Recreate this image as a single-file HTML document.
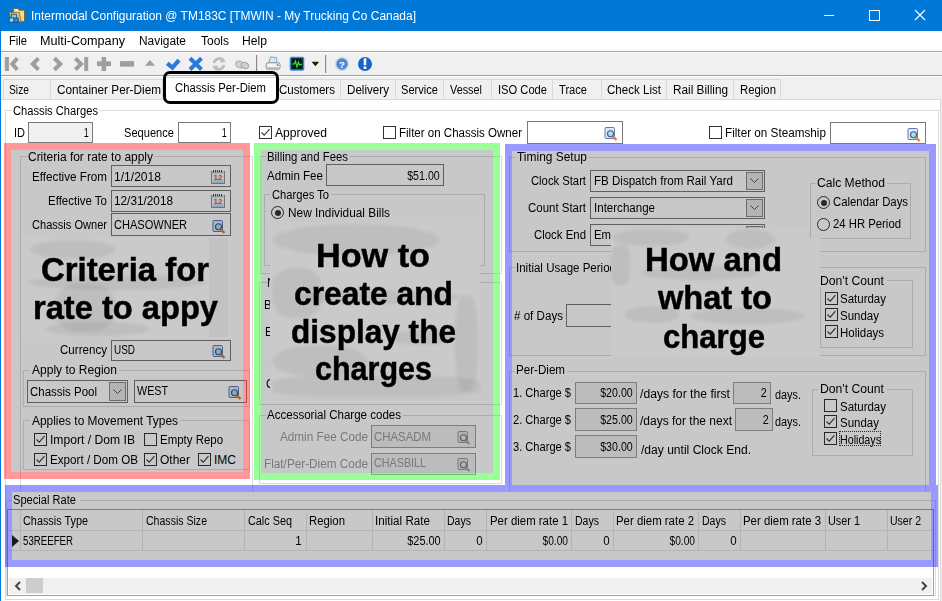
<!DOCTYPE html>
<html><head><meta charset="utf-8"><style>
html,body{margin:0;padding:0;}
body{width:942px;height:601px;overflow:hidden;position:relative;background:#fff;font-family:"Liberation Sans", sans-serif;}
</style></head><body><div style="position:absolute;left:0px;top:0px;width:942px;height:31px;background:#0078d7"></div><svg style="position:absolute;left:0;top:0" width="30" height="30" viewBox="0 0 30 30">
<path d="M13.3 8.6 L18 8.6 L19.2 10.2 L24.5 10.2 L24.5 21.5 L14 21.5 Z" fill="#f3dc92" stroke="#7d5e1c" stroke-width="0.8"/>
<path d="M14.5 9.5 L17.5 9.5 L18.5 11 L17 11 Z" fill="#fff8e0"/>
<path d="M9.4 12.4 L19.3 12.4 L21.2 21.7 L11.2 21.7 Z" fill="#e5c26a" stroke="#8a6a22" stroke-width="0.8"/>
<g stroke="#173c73" stroke-width="0.7">
<rect x="11.4" y="14.2" width="5.2" height="4.2" fill="#7cc6f2"/>
<rect x="9.3" y="18" width="4.6" height="4.1" fill="#93d3f7"/>
<rect x="13.9" y="18" width="4.4" height="4.1" fill="#3c82c4"/>
</g>
</svg><span class="tx0" style="position:absolute;left:31px;top:9.84px;font-size:12px;line-height:12px;white-space:nowrap;transform-origin:left center;transform:scaleX(0.9971);color:#fff;font-weight:normal;">Intermodal Configuration @ TM183C [TMWIN - My Trucking Co Canada]</span><div style="position:absolute;left:824px;top:15px;width:10px;height:1px;background:#fff"></div><div style="position:absolute;left:869px;top:10px;width:11px;height:11px;box-sizing:border-box;border:1px solid #fff"></div><svg style="position:absolute;left:914px;top:9px" width="12" height="12" viewBox="0 0 12 12"><path d="M1 1 L11 11 M11 1 L1 11" stroke="#fff" stroke-width="1.1"/></svg><div style="position:absolute;left:0px;top:31px;width:1px;height:570px;background:#0078d7"></div><span class="tx1" style="position:absolute;left:9px;top:34.84px;font-size:12px;line-height:12px;white-space:nowrap;transform-origin:left center;transform:scaleX(0.9305);color:#000;font-weight:normal;">File</span><span class="tx2" style="position:absolute;left:40px;top:34.84px;font-size:12px;line-height:12px;white-space:nowrap;transform-origin:left center;transform:scaleX(1.0532);color:#000;font-weight:normal;">Multi-Company</span><span class="tx3" style="position:absolute;left:139px;top:34.84px;font-size:12px;line-height:12px;white-space:nowrap;transform-origin:left center;transform:scaleX(0.9921);color:#000;font-weight:normal;">Navigate</span><span class="tx4" style="position:absolute;left:201px;top:34.84px;font-size:12px;line-height:12px;white-space:nowrap;transform-origin:left center;transform:scaleX(0.9994);color:#000;font-weight:normal;">Tools</span><span class="tx5" style="position:absolute;left:242px;top:34.84px;font-size:12px;line-height:12px;white-space:nowrap;transform-origin:left center;transform:scaleX(1.0127);color:#000;font-weight:normal;">Help</span><div style="position:absolute;left:1px;top:49px;width:941px;height:1px;background:#f2f2f2"></div><div style="position:absolute;left:1px;top:51px;width:941px;height:1px;background:#a0a0a0"></div><div style="position:absolute;left:1px;top:53px;width:941px;height:22px;background:#f0f0f0"></div><div style="position:absolute;left:1px;top:75px;width:941px;height:1px;background:#a0a0a0"></div><svg style="position:absolute;left:0;top:52px" width="380" height="24" viewBox="0 0 380 24">
<g fill="#9e9e9e">
<rect x="4.8" y="5" width="4.1" height="14"/>
<rect x="84.2" y="5" width="4" height="14"/>
<rect x="97" y="9.3" width="14" height="4.8"/>
<rect x="101.6" y="5" width="4.5" height="14"/>
<rect x="120" y="9.1" width="14" height="5.5"/>
<path d="M145 13.8 L150 7.9 L155.1 13.8 Z"/>
</g>
<g fill="none" stroke="#9e9e9e" stroke-width="4" stroke-linejoin="miter" stroke-miterlimit="4">
<polyline points="17.3,6.3 12.4,12 17.3,17.7"/>
<polyline points="38.4,6.3 32.8,12 38.4,17.7"/>
<polyline points="54.4,6.3 60.2,12 54.4,17.7"/>
<polyline points="75.4,6.3 81,12 75.4,17.7"/>
</g>
<polyline points="167.2,11.3 172.5,15.6 179,8.2" fill="none" stroke="#2a7ad8" stroke-width="4.2"/>
<path d="M190 6.3 L201.5 17.5 M201.5 6.3 L190 17.5" stroke="#2a7ad8" stroke-width="4"/>
<path d="M214 11 A5.5 5.5 0 0 1 223.5 8.5 M224 13 A5.5 5.5 0 0 1 214.5 15.5" fill="none" stroke="#bdbdbd" stroke-width="2.8"/>
<path d="M221.5 5 L226 10 L220 10.5 Z M216.5 19 L212 14 L218 13.5 Z" fill="#bdbdbd"/>
<g fill="#d0d0d0" stroke="#a8a8a8" stroke-width="1"><ellipse cx="240" cy="12.5" rx="4.5" ry="3.3" transform="rotate(20 240 12.5)"/><ellipse cx="245" cy="13.5" rx="3.8" ry="3" transform="rotate(20 245 13.5)"/></g>
<rect x="256" y="3" width="1.2" height="16" fill="#8a8a8a"/>
<path d="M268.5 11.5 L270.5 4.8 L276.5 5.6 L277 11.5 Z" fill="#c6ecfa" stroke="#6e9cb2" stroke-width="0.8"/>
<rect x="266.2" y="10.8" width="13.8" height="6.4" rx="1.6" fill="#f4f4f4" stroke="#8c8c8c" stroke-width="1"/>
<rect x="267.2" y="15.2" width="11.8" height="3" fill="#b8b8b8"/>
<circle cx="277.6" cy="13" r="1" fill="#2fbf3a"/>
<rect x="290.5" y="5.5" width="13" height="12.5" rx="1" fill="#0a1a0a" stroke="#2f8ae0" stroke-width="1.6"/>
<path d="M292 12 L294.5 12 L295.5 9 L297 15 L298.5 10 L299.5 13 L302 12" fill="none" stroke="#3fe05a" stroke-width="1.1"/>
<path d="M311.6 9.7 L319.2 9.7 L315.4 14.3 Z" fill="#1a1a1a"/>
<rect x="325" y="3" width="1.2" height="18" fill="#8a8a8a"/>
<circle cx="342" cy="12" r="6.4" fill="#4a8ad6" stroke="#d8d8d8" stroke-width="1.4"/>
<text x="342" y="15.8" font-family="Liberation Sans" font-size="9.5" font-weight="bold" fill="#fff" text-anchor="middle">?</text>
<circle cx="365" cy="12" r="7" fill="#1466cc"/>
<rect x="363.7" y="6.3" width="2.6" height="6.8" fill="#fff"/>
<rect x="363.7" y="14.4" width="2.6" height="2.6" fill="#fff"/>
</svg><div style="position:absolute;left:1px;top:76px;width:941px;height:1px;background:#fff"></div><div style="position:absolute;left:1px;top:77px;width:941px;height:22px;background:#f0f0f0"></div><div style="position:absolute;left:3px;top:79px;width:778px;height:21px;box-sizing:border-box;border:1px solid #d9d9d9;border-bottom:none;background:#f0f0f0"></div><div style="position:absolute;left:781px;top:77px;width:161px;height:22px;background:#f0f0f0"></div><div style="position:absolute;left:941px;top:99px;width:1px;height:502px;background:#f0f0f0"></div><div style="position:absolute;left:50px;top:79px;width:1px;height:21px;background:#d9d9d9"></div><div style="position:absolute;left:162px;top:79px;width:1px;height:21px;background:#d9d9d9"></div><div style="position:absolute;left:278px;top:79px;width:1px;height:21px;background:#d9d9d9"></div><div style="position:absolute;left:340px;top:79px;width:1px;height:21px;background:#d9d9d9"></div><div style="position:absolute;left:395px;top:79px;width:1px;height:21px;background:#d9d9d9"></div><div style="position:absolute;left:443px;top:79px;width:1px;height:21px;background:#d9d9d9"></div><div style="position:absolute;left:491px;top:79px;width:1px;height:21px;background:#d9d9d9"></div><div style="position:absolute;left:552px;top:79px;width:1px;height:21px;background:#d9d9d9"></div><div style="position:absolute;left:601px;top:79px;width:1px;height:21px;background:#d9d9d9"></div><div style="position:absolute;left:666px;top:79px;width:1px;height:21px;background:#d9d9d9"></div><div style="position:absolute;left:733px;top:79px;width:1px;height:21px;background:#d9d9d9"></div><div style="position:absolute;left:1px;top:99px;width:940px;height:1px;background:#d9d9d9"></div><span class="tx6" style="position:absolute;left:9px;top:83.84px;font-size:12px;line-height:12px;white-space:nowrap;transform-origin:left center;transform:scaleX(0.8568);color:#000;font-weight:normal;">Size</span><span class="tx7" style="position:absolute;left:57px;top:83.84px;font-size:12px;line-height:12px;white-space:nowrap;transform-origin:left center;transform:scaleX(0.9807);color:#000;font-weight:normal;">Container Per-Diem</span><span class="tx8" style="position:absolute;left:279px;top:83.84px;font-size:12px;line-height:12px;white-space:nowrap;transform-origin:left center;transform:scaleX(0.9653);color:#000;font-weight:normal;">Customers</span><span class="tx9" style="position:absolute;left:347px;top:83.84px;font-size:12px;line-height:12px;white-space:nowrap;transform-origin:left center;transform:scaleX(0.9690);color:#000;font-weight:normal;">Delivery</span><span class="tx10" style="position:absolute;left:401px;top:83.84px;font-size:12px;line-height:12px;white-space:nowrap;transform-origin:left center;transform:scaleX(0.9246);color:#000;font-weight:normal;">Service</span><span class="tx11" style="position:absolute;left:450px;top:83.84px;font-size:12px;line-height:12px;white-space:nowrap;transform-origin:left center;transform:scaleX(0.9050);color:#000;font-weight:normal;">Vessel</span><span class="tx12" style="position:absolute;left:498px;top:83.84px;font-size:12px;line-height:12px;white-space:nowrap;transform-origin:left center;transform:scaleX(0.9297);color:#000;font-weight:normal;">ISO Code</span><span class="tx13" style="position:absolute;left:559px;top:83.84px;font-size:12px;line-height:12px;white-space:nowrap;transform-origin:left center;transform:scaleX(0.9261);color:#000;font-weight:normal;">Trace</span><span class="tx14" style="position:absolute;left:607px;top:83.84px;font-size:12px;line-height:12px;white-space:nowrap;transform-origin:left center;transform:scaleX(0.9637);color:#000;font-weight:normal;">Check List</span><span class="tx15" style="position:absolute;left:673px;top:83.84px;font-size:12px;line-height:12px;white-space:nowrap;transform-origin:left center;transform:scaleX(0.9816);color:#000;font-weight:normal;">Rail Billing</span><span class="tx16" style="position:absolute;left:740px;top:83.84px;font-size:12px;line-height:12px;white-space:nowrap;transform-origin:left center;transform:scaleX(0.9466);color:#000;font-weight:normal;">Region</span><div style="position:absolute;left:165px;top:74px;width:112px;height:27px;background:#fff"></div><div style="position:absolute;left:165px;top:75px;width:112px;height:1px;background:#a0a0a0"></div><div style="position:absolute;left:165px;top:77px;width:112px;height:1px;background:#d9d9d9"></div><span class="tx17" style="position:absolute;left:175px;top:81.84px;font-size:12px;line-height:12px;white-space:nowrap;transform-origin:left center;transform:scaleX(0.9412);color:#000;font-weight:normal;">Chassis Per-Diem</span><div style="position:absolute;left:163px;top:71px;width:116px;height:33px;box-sizing:border-box;border:3.5px solid #000;border-radius:7px"></div><div style="position:absolute;left:940px;top:100px;width:1px;height:501px;background:#d9d9d9"></div><div style="position:absolute;left:5px;top:110px;width:934px;height:490px;box-sizing:border-box;border:1px solid #dcdcdc"></div><div style="position:absolute;left:12px;top:104px;width:87px;height:13px;background:#fff"></div><span class="tx18" style="position:absolute;left:13px;top:104.84px;font-size:12px;line-height:12px;white-space:nowrap;transform-origin:left center;transform:scaleX(0.9302);color:#000;font-weight:normal;">Chassis Charges</span><span class="tx19" style="position:absolute;left:14px;top:126.84px;font-size:12px;line-height:12px;white-space:nowrap;transform-origin:left center;transform:scaleX(0.9167);color:#000;font-weight:normal;">ID</span><div style="position:absolute;left:28px;top:122px;width:65px;height:21px;box-sizing:border-box;border:1px solid #7a7a7a;background:#f0f0f0"></div><span class="tx20" style="position:absolute;right:853px;top:126.84px;font-size:12px;line-height:12px;white-space:nowrap;transform-origin:right center;transform:scaleX(0.7477);color:#000;font-weight:normal;">1</span><span class="tx21" style="position:absolute;left:124px;top:126.84px;font-size:12px;line-height:12px;white-space:nowrap;transform-origin:left center;transform:scaleX(0.9251);color:#000;font-weight:normal;">Sequence</span><div style="position:absolute;left:178px;top:122px;width:53px;height:21px;box-sizing:border-box;border:1px solid #7a7a7a;background:#fff"></div><span class="tx22" style="position:absolute;right:715px;top:126.84px;font-size:12px;line-height:12px;white-space:nowrap;transform-origin:right center;transform:scaleX(0.7477);color:#000;font-weight:normal;">1</span><div style="position:absolute;left:259px;top:126px;width:13px;height:13px;box-sizing:border-box;border:1px solid #333;background:transparent"><svg width="11" height="11" style="position:absolute;left:0;top:0" viewBox="0 0 11 11"><path d="M1.5 5.5 L4.2 8.2 L9.5 2.2" fill="none" stroke="#3a3a3a" stroke-width="1.1"/></svg></div><span class="tx23" style="position:absolute;left:275px;top:126.84px;font-size:12px;line-height:12px;white-space:nowrap;transform-origin:left center;transform:scaleX(1.0122);color:#000;font-weight:normal;">Approved</span><div style="position:absolute;left:383px;top:126px;width:13px;height:13px;box-sizing:border-box;border:1px solid #333;background:transparent"></div><span class="tx24" style="position:absolute;left:399px;top:126.84px;font-size:12px;line-height:12px;white-space:nowrap;transform-origin:left center;transform:scaleX(0.9606);color:#000;font-weight:normal;">Filter on Chassis Owner</span><div style="position:absolute;left:527px;top:121px;width:96px;height:23px;box-sizing:border-box;border:1px solid #7a7a7a;background:#fff"></div><svg style="position:absolute;left:604px;top:126px" width="14" height="15" viewBox="0 0 14 15">
<rect x="1" y="1.5" width="9.5" height="11" rx="1" fill="#d5ecf8" stroke="#6474c0" stroke-width="1"/>
<circle cx="6.5" cy="7.8" r="3" fill="#a6e2f8" stroke="#505a6a" stroke-width="1.1"/>
<path d="M9 10.5 L12.5 14" stroke="#ee7a22" stroke-width="2.4"/></svg><div style="position:absolute;left:709px;top:126px;width:13px;height:13px;box-sizing:border-box;border:1px solid #333;background:transparent"></div><span class="tx25" style="position:absolute;left:725px;top:126.84px;font-size:12px;line-height:12px;white-space:nowrap;transform-origin:left center;transform:scaleX(0.9769);color:#000;font-weight:normal;">Filter on Steamship</span><div style="position:absolute;left:830px;top:122px;width:96px;height:22px;box-sizing:border-box;border:1px solid #7a7a7a;background:#fff"></div><svg style="position:absolute;left:907px;top:127px" width="14" height="15" viewBox="0 0 14 15">
<rect x="1" y="1.5" width="9.5" height="11" rx="1" fill="#d5ecf8" stroke="#6474c0" stroke-width="1"/>
<circle cx="6.5" cy="7.8" r="3" fill="#a6e2f8" stroke="#505a6a" stroke-width="1.1"/>
<path d="M9 10.5 L12.5 14" stroke="#ee7a22" stroke-width="2.4"/></svg><div style="position:absolute;left:20px;top:156px;width:233px;height:336px;box-sizing:border-box;border:1px solid #dcdcdc;border-bottom:0"></div><div style="position:absolute;left:27px;top:150px;width:127px;height:13px;background:#fff"></div><span class="tx26" style="position:absolute;left:28px;top:150.84px;font-size:12px;line-height:12px;white-space:nowrap;transform-origin:left center;transform:scaleX(0.9969);color:#000;font-weight:normal;">Criteria for rate to apply</span><span class="tx27" style="position:absolute;left:32px;top:170.84px;font-size:12px;line-height:12px;white-space:nowrap;transform-origin:left center;transform:scaleX(0.9723);color:#000;font-weight:normal;">Effective From</span><div style="position:absolute;left:111px;top:165px;width:120px;height:22px;box-sizing:border-box;border:1px solid #7a7a7a;background:#fff"></div><span class="tx28" style="position:absolute;left:114px;top:170.84px;font-size:12px;line-height:12px;white-space:nowrap;transform-origin:left center;transform:scaleX(1.0060);color:#000;font-weight:normal;">1/1/2018</span><svg style="position:absolute;left:211px;top:170px" width="15" height="15" viewBox="0 0 15 15">
<rect x="0.5" y="1.5" width="13" height="12" fill="#f4f6f8" stroke="#8a96a3" stroke-width="1"/>
<rect x="1" y="1" width="12" height="2.5" fill="#d6dde4"/>
<g fill="#4a4a4a"><rect x="2" y="0" width="1" height="2.5"/><rect x="4" y="0" width="1" height="2.5"/><rect x="6" y="0" width="1" height="2.5"/><rect x="8" y="0" width="1" height="2.5"/><rect x="10" y="0" width="1" height="2.5"/></g>
<text x="7" y="10" font-family="Liberation Sans" font-size="8" font-weight="bold" fill="#e8561c" text-anchor="middle">12</text>
<rect x="1.5" y="10.5" width="11" height="2.5" fill="#b9d8ec"/>
</svg><span class="tx29" style="position:absolute;left:48px;top:194.84px;font-size:12px;line-height:12px;white-space:nowrap;transform-origin:left center;transform:scaleX(0.9579);color:#000;font-weight:normal;">Effective To</span><div style="position:absolute;left:111px;top:190px;width:120px;height:22px;box-sizing:border-box;border:1px solid #7a7a7a;background:#fff"></div><span class="tx30" style="position:absolute;left:114px;top:194.84px;font-size:12px;line-height:12px;white-space:nowrap;transform-origin:left center;transform:scaleX(0.9823);color:#000;font-weight:normal;">12/31/2018</span><svg style="position:absolute;left:211px;top:194px" width="15" height="15" viewBox="0 0 15 15">
<rect x="0.5" y="1.5" width="13" height="12" fill="#f4f6f8" stroke="#8a96a3" stroke-width="1"/>
<rect x="1" y="1" width="12" height="2.5" fill="#d6dde4"/>
<g fill="#4a4a4a"><rect x="2" y="0" width="1" height="2.5"/><rect x="4" y="0" width="1" height="2.5"/><rect x="6" y="0" width="1" height="2.5"/><rect x="8" y="0" width="1" height="2.5"/><rect x="10" y="0" width="1" height="2.5"/></g>
<text x="7" y="10" font-family="Liberation Sans" font-size="8" font-weight="bold" fill="#e8561c" text-anchor="middle">12</text>
<rect x="1.5" y="10.5" width="11" height="2.5" fill="#b9d8ec"/>
</svg><span class="tx31" style="position:absolute;left:32px;top:218.84px;font-size:12px;line-height:12px;white-space:nowrap;transform-origin:left center;transform:scaleX(0.9218);color:#000;font-weight:normal;">Chassis Owner</span><div style="position:absolute;left:111px;top:213px;width:120px;height:23px;box-sizing:border-box;border:1px solid #7a7a7a;background:#fff"></div><span class="tx32" style="position:absolute;left:114px;top:218.84px;font-size:12px;line-height:12px;white-space:nowrap;transform-origin:left center;transform:scaleX(0.9200);color:#000;font-weight:normal;">CHASOWNER</span><svg style="position:absolute;left:212px;top:219px" width="14" height="15" viewBox="0 0 14 15">
<rect x="1" y="1.5" width="9.5" height="11" rx="1" fill="#d5ecf8" stroke="#6474c0" stroke-width="1"/>
<circle cx="6.5" cy="7.8" r="3" fill="#a6e2f8" stroke="#505a6a" stroke-width="1.1"/>
<path d="M9 10.5 L12.5 14" stroke="#ee7a22" stroke-width="2.4"/></svg><span class="tx33" style="position:absolute;left:60px;top:343.84px;font-size:12px;line-height:12px;white-space:nowrap;transform-origin:left center;transform:scaleX(0.9653);color:#000;font-weight:normal;">Currency</span><div style="position:absolute;left:111px;top:340px;width:120px;height:21px;box-sizing:border-box;border:1px solid #7a7a7a;background:#fff"></div><span class="tx34" style="position:absolute;left:114px;top:343.84px;font-size:12px;line-height:12px;white-space:nowrap;transform-origin:left center;transform:scaleX(0.8286);color:#000;font-weight:normal;">USD</span><svg style="position:absolute;left:212px;top:344px" width="14" height="15" viewBox="0 0 14 15">
<rect x="1" y="1.5" width="9.5" height="11" rx="1" fill="#d5ecf8" stroke="#6474c0" stroke-width="1"/>
<circle cx="6.5" cy="7.8" r="3" fill="#a6e2f8" stroke="#505a6a" stroke-width="1.1"/>
<path d="M9 10.5 L12.5 14" stroke="#ee7a22" stroke-width="2.4"/></svg><div style="position:absolute;left:23px;top:370px;width:227px;height:37px;box-sizing:border-box;border:1px solid #dcdcdc;border-radius:0"></div><div style="position:absolute;left:30px;top:364px;width:89px;height:13px;background:#fff"></div><span class="tx35" style="position:absolute;left:32px;top:363.84px;font-size:12px;line-height:12px;white-space:nowrap;transform-origin:left center;transform:scaleX(1.0031);color:#000;font-weight:normal;">Apply to Region</span><div style="position:absolute;left:27px;top:380px;width:101px;height:23px;box-sizing:border-box;border:1px solid #7a7a7a;background:#fff"></div><div style="position:absolute;left:109px;top:382px;width:17px;height:19px;box-sizing:border-box;border:1px solid #8c8c8c;background:#e6e6e6"></div><svg style="position:absolute;left:113.0px;top:388.5px" width="9" height="6" viewBox="0 0 9 6"><path d="M0.5 0.5 L4.5 4.5 L8.5 0.5" fill="none" stroke="#555" stroke-width="1"/></svg><span class="tx36" style="position:absolute;left:30px;top:385.84px;font-size:12px;line-height:12px;white-space:nowrap;transform-origin:left center;transform:scaleX(0.9567);color:#000;font-weight:normal;">Chassis Pool</span><div style="position:absolute;left:134px;top:380px;width:113px;height:23px;box-sizing:border-box;border:1px solid #7a7a7a;background:#fff"></div><span class="tx37" style="position:absolute;left:137px;top:384.84px;font-size:12px;line-height:12px;white-space:nowrap;transform-origin:left center;transform:scaleX(0.8941);color:#000;font-weight:normal;">WEST</span><svg style="position:absolute;left:228px;top:385px" width="14" height="15" viewBox="0 0 14 15">
<rect x="1" y="1.5" width="9.5" height="11" rx="1" fill="#d5ecf8" stroke="#6474c0" stroke-width="1"/>
<circle cx="6.5" cy="7.8" r="3" fill="#a6e2f8" stroke="#505a6a" stroke-width="1.1"/>
<path d="M9 10.5 L12.5 14" stroke="#ee7a22" stroke-width="2.4"/></svg><div style="position:absolute;left:23px;top:420px;width:227px;height:50px;box-sizing:border-box;border:1px solid #dcdcdc;border-radius:0"></div><div style="position:absolute;left:30px;top:414px;width:150px;height:13px;background:#fff"></div><span class="tx38" style="position:absolute;left:32px;top:414.84px;font-size:12px;line-height:12px;white-space:nowrap;transform-origin:left center;transform:scaleX(0.9919);color:#000;font-weight:normal;">Applies to Movement Types</span><div style="position:absolute;left:34px;top:433px;width:13px;height:13px;box-sizing:border-box;border:1px solid #333;background:transparent"><svg width="11" height="11" style="position:absolute;left:0;top:0" viewBox="0 0 11 11"><path d="M1.5 5.5 L4.2 8.2 L9.5 2.2" fill="none" stroke="#3a3a3a" stroke-width="1.1"/></svg></div><span class="tx39" style="position:absolute;left:50px;top:433.84px;font-size:12px;line-height:12px;white-space:nowrap;transform-origin:left center;transform:scaleX(1.0115);color:#000;font-weight:normal;">Import / Dom IB</span><div style="position:absolute;left:144px;top:433px;width:13px;height:13px;box-sizing:border-box;border:1px solid #333;background:transparent"></div><span class="tx40" style="position:absolute;left:160px;top:433.84px;font-size:12px;line-height:12px;white-space:nowrap;transform-origin:left center;transform:scaleX(0.9541);color:#000;font-weight:normal;">Empty Repo</span><div style="position:absolute;left:34px;top:453px;width:13px;height:13px;box-sizing:border-box;border:1px solid #333;background:transparent"><svg width="11" height="11" style="position:absolute;left:0;top:0" viewBox="0 0 11 11"><path d="M1.5 5.5 L4.2 8.2 L9.5 2.2" fill="none" stroke="#3a3a3a" stroke-width="1.1"/></svg></div><span class="tx41" style="position:absolute;left:50px;top:453.84px;font-size:12px;line-height:12px;white-space:nowrap;transform-origin:left center;transform:scaleX(0.9702);color:#000;font-weight:normal;">Export / Dom OB</span><div style="position:absolute;left:144px;top:453px;width:13px;height:13px;box-sizing:border-box;border:1px solid #333;background:transparent"><svg width="11" height="11" style="position:absolute;left:0;top:0" viewBox="0 0 11 11"><path d="M1.5 5.5 L4.2 8.2 L9.5 2.2" fill="none" stroke="#3a3a3a" stroke-width="1.1"/></svg></div><span class="tx42" style="position:absolute;left:160px;top:453.84px;font-size:12px;line-height:12px;white-space:nowrap;transform-origin:left center;transform:scaleX(0.9995);color:#000;font-weight:normal;">Other</span><div style="position:absolute;left:198px;top:453px;width:13px;height:13px;box-sizing:border-box;border:1px solid #333;background:transparent"><svg width="11" height="11" style="position:absolute;left:0;top:0" viewBox="0 0 11 11"><path d="M1.5 5.5 L4.2 8.2 L9.5 2.2" fill="none" stroke="#3a3a3a" stroke-width="1.1"/></svg></div><span class="tx43" style="position:absolute;left:214px;top:453.84px;font-size:12px;line-height:12px;white-space:nowrap;transform-origin:left center;transform:scaleX(1.0000);color:#000;font-weight:normal;">IMC</span><div style="position:absolute;left:260px;top:156px;width:242px;height:118px;box-sizing:border-box;border:1px solid #dcdcdc;border-radius:0"></div><div style="position:absolute;left:266px;top:150px;width:84px;height:13px;background:#fff"></div><span class="tx44" style="position:absolute;left:267px;top:150.84px;font-size:12px;line-height:12px;white-space:nowrap;transform-origin:left center;transform:scaleX(0.9486);color:#000;font-weight:normal;">Billing and Fees</span><span class="tx45" style="position:absolute;left:267px;top:169.84px;font-size:12px;line-height:12px;white-space:nowrap;transform-origin:left center;transform:scaleX(0.9650);color:#000;font-weight:normal;">Admin Fee</span><div style="position:absolute;left:326px;top:164px;width:118px;height:22px;box-sizing:border-box;border:1px solid #7a7a7a;background:#fff"></div><span class="tx46" style="position:absolute;right:502px;top:169.84px;font-size:12px;line-height:12px;white-space:nowrap;transform-origin:right center;transform:scaleX(0.8855);color:#000;font-weight:normal;">$51.00</span><div style="position:absolute;left:264px;top:194px;width:221px;height:72px;box-sizing:border-box;border:1px solid #dcdcdc;border-radius:0"></div><div style="position:absolute;left:270px;top:188px;width:61px;height:13px;background:#fff"></div><span class="tx47" style="position:absolute;left:272px;top:188.84px;font-size:12px;line-height:12px;white-space:nowrap;transform-origin:left center;transform:scaleX(0.9320);color:#000;font-weight:normal;">Charges To</span><div style="position:absolute;left:271px;top:206px;width:13px;height:13px;box-sizing:border-box;border:1px solid #333;border-radius:50%"><div style="position:absolute;left:2.5px;top:2.5px;width:6px;height:6px;border-radius:50%;background:#333"></div></div><span class="tx48" style="position:absolute;left:288px;top:206.84px;font-size:12px;line-height:12px;white-space:nowrap;transform-origin:left center;transform:scaleX(0.9865);color:#000;font-weight:normal;">New Individual Bills</span><div style="position:absolute;left:259px;top:282px;width:243px;height:123px;box-sizing:border-box;border:1px solid #dcdcdc;border-radius:0"></div><span class="tx49" style="position:absolute;left:267px;top:276.84px;font-size:12px;line-height:12px;white-space:nowrap;transform-origin:left center;transform:scaleX(0.9600);color:#000;font-weight:normal;">N</span><span class="tx50" style="position:absolute;left:264px;top:298.84px;font-size:12px;line-height:12px;white-space:nowrap;transform-origin:left center;transform:scaleX(0.9600);color:#000;font-weight:normal;">B</span><span class="tx51" style="position:absolute;left:265px;top:325.84px;font-size:12px;line-height:12px;white-space:nowrap;transform-origin:left center;transform:scaleX(0.9600);color:#000;font-weight:normal;">E</span><span class="tx52" style="position:absolute;left:266px;top:377.84px;font-size:12px;line-height:12px;white-space:nowrap;transform-origin:left center;transform:scaleX(0.9600);color:#000;font-weight:normal;">C</span><div style="position:absolute;left:259px;top:415px;width:243px;height:69px;box-sizing:border-box;border:1px solid #dcdcdc;border-radius:0"></div><div style="position:absolute;left:266px;top:409px;width:137px;height:13px;background:#fff"></div><span class="tx53" style="position:absolute;left:267px;top:408.84px;font-size:12px;line-height:12px;white-space:nowrap;transform-origin:left center;transform:scaleX(0.9612);color:#000;font-weight:normal;">Accessorial Charge codes</span><span class="tx54" style="position:absolute;left:280px;top:430.84px;font-size:12px;line-height:12px;white-space:nowrap;transform-origin:left center;transform:scaleX(0.9773);color:#9a9a9a;font-weight:normal;">Admin Fee Code</span><div style="position:absolute;left:371px;top:425px;width:105px;height:23px;box-sizing:border-box;border:1px solid #a0a0a0;background:#f0f0f0"></div><span class="tx55" style="position:absolute;left:374px;top:430.84px;font-size:12px;line-height:12px;white-space:nowrap;transform-origin:left center;transform:scaleX(0.9498);color:#9a9a9a;font-weight:normal;">CHASADM</span><svg style="position:absolute;left:457px;top:430px" width="14" height="15" viewBox="0 0 14 15">
<rect x="1" y="1.5" width="9.5" height="11" rx="1" fill="#e2e2e2" stroke="#9a9a9a" stroke-width="1"/>
<circle cx="6.5" cy="7.8" r="3" fill="#e8e8e8" stroke="#7a7a7a" stroke-width="1.1"/>
<path d="M9 10.5 L12.5 14" stroke="#a8a8a8" stroke-width="2.4"/></svg><span class="tx56" style="position:absolute;left:264px;top:457.84px;font-size:12px;line-height:12px;white-space:nowrap;transform-origin:left center;transform:scaleX(0.9808);color:#9a9a9a;font-weight:normal;">Flat/Per-Diem Code</span><div style="position:absolute;left:371px;top:453px;width:105px;height:22px;box-sizing:border-box;border:1px solid #a0a0a0;background:#f0f0f0"></div><span class="tx57" style="position:absolute;left:374px;top:456.84px;font-size:12px;line-height:12px;white-space:nowrap;transform-origin:left center;transform:scaleX(0.8961);color:#9a9a9a;font-weight:normal;">CHASBILL</span><svg style="position:absolute;left:457px;top:457px" width="14" height="15" viewBox="0 0 14 15">
<rect x="1" y="1.5" width="9.5" height="11" rx="1" fill="#e2e2e2" stroke="#9a9a9a" stroke-width="1"/>
<circle cx="6.5" cy="7.8" r="3" fill="#e8e8e8" stroke="#7a7a7a" stroke-width="1.1"/>
<path d="M9 10.5 L12.5 14" stroke="#a8a8a8" stroke-width="2.4"/></svg><div style="position:absolute;left:509px;top:157px;width:417px;height:95px;box-sizing:border-box;border:1px solid #dcdcdc;border-radius:0"></div><div style="position:absolute;left:515px;top:151px;width:74px;height:13px;background:#fff"></div><span class="tx58" style="position:absolute;left:517px;top:150.84px;font-size:12px;line-height:12px;white-space:nowrap;transform-origin:left center;transform:scaleX(0.9962);color:#000;font-weight:normal;">Timing Setup</span><span class="tx59" style="position:absolute;left:531px;top:174.84px;font-size:12px;line-height:12px;white-space:nowrap;transform-origin:left center;transform:scaleX(0.9372);color:#000;font-weight:normal;">Clock Start</span><div style="position:absolute;left:590px;top:170px;width:175px;height:22px;box-sizing:border-box;border:1px solid #7a7a7a;background:#fff"></div><div style="position:absolute;left:746px;top:172px;width:17px;height:18px;box-sizing:border-box;border:1px solid #8c8c8c;background:#e6e6e6"></div><svg style="position:absolute;left:750.0px;top:178.0px" width="9" height="6" viewBox="0 0 9 6"><path d="M0.5 0.5 L4.5 4.5 L8.5 0.5" fill="none" stroke="#555" stroke-width="1"/></svg><span class="tx60" style="position:absolute;left:594px;top:174.84px;font-size:12px;line-height:12px;white-space:nowrap;transform-origin:left center;transform:scaleX(0.9634);color:#000;font-weight:normal;">FB Dispatch from Rail Yard</span><span class="tx61" style="position:absolute;left:528px;top:201.84px;font-size:12px;line-height:12px;white-space:nowrap;transform-origin:left center;transform:scaleX(0.9555);color:#000;font-weight:normal;">Count Start</span><div style="position:absolute;left:590px;top:197px;width:175px;height:22px;box-sizing:border-box;border:1px solid #7a7a7a;background:#fff"></div><div style="position:absolute;left:746px;top:199px;width:17px;height:18px;box-sizing:border-box;border:1px solid #8c8c8c;background:#e6e6e6"></div><svg style="position:absolute;left:750.0px;top:205.0px" width="9" height="6" viewBox="0 0 9 6"><path d="M0.5 0.5 L4.5 4.5 L8.5 0.5" fill="none" stroke="#555" stroke-width="1"/></svg><span class="tx62" style="position:absolute;left:594px;top:201.84px;font-size:12px;line-height:12px;white-space:nowrap;transform-origin:left center;transform:scaleX(0.9623);color:#000;font-weight:normal;">Interchange</span><span class="tx63" style="position:absolute;left:534px;top:228.84px;font-size:12px;line-height:12px;white-space:nowrap;transform-origin:left center;transform:scaleX(0.9506);color:#000;font-weight:normal;">Clock End</span><div style="position:absolute;left:590px;top:224px;width:175px;height:22px;box-sizing:border-box;border:1px solid #7a7a7a;background:#fff"></div><div style="position:absolute;left:746px;top:226px;width:17px;height:18px;box-sizing:border-box;border:1px solid #8c8c8c;background:#e6e6e6"></div><svg style="position:absolute;left:750.0px;top:232.0px" width="9" height="6" viewBox="0 0 9 6"><path d="M0.5 0.5 L4.5 4.5 L8.5 0.5" fill="none" stroke="#555" stroke-width="1"/></svg><span class="tx64" style="position:absolute;left:594px;top:228.84px;font-size:12px;line-height:12px;white-space:nowrap;transform-origin:left center;transform:scaleX(0.9407);color:#000;font-weight:normal;">Empty</span><div style="position:absolute;left:810px;top:183px;width:101px;height:56px;box-sizing:border-box;border:1px solid #dcdcdc;border-radius:0"></div><div style="position:absolute;left:816px;top:177px;width:71px;height:13px;background:#fff"></div><span class="tx65" style="position:absolute;left:817px;top:176.84px;font-size:12px;line-height:12px;white-space:nowrap;transform-origin:left center;transform:scaleX(1.0093);color:#000;font-weight:normal;">Calc Method</span><div style="position:absolute;left:817px;top:196px;width:13px;height:13px;box-sizing:border-box;border:1px solid #333;border-radius:50%"><div style="position:absolute;left:2.5px;top:2.5px;width:6px;height:6px;border-radius:50%;background:#333"></div></div><span class="tx66" style="position:absolute;left:833px;top:195.84px;font-size:12px;line-height:12px;white-space:nowrap;transform-origin:left center;transform:scaleX(0.9449);color:#000;font-weight:normal;">Calendar Days</span><div style="position:absolute;left:817px;top:218px;width:13px;height:13px;box-sizing:border-box;border:1px solid #333;border-radius:50%"></div><span class="tx67" style="position:absolute;left:833px;top:217.84px;font-size:12px;line-height:12px;white-space:nowrap;transform-origin:left center;transform:scaleX(0.9438);color:#000;font-weight:normal;">24 HR Period</span><div style="position:absolute;left:509px;top:267px;width:417px;height:89px;box-sizing:border-box;border:1px solid #dcdcdc;border-radius:0"></div><div style="position:absolute;left:515px;top:261px;width:100px;height:13px;background:#fff"></div><span class="tx68" style="position:absolute;left:516px;top:261.84px;font-size:12px;line-height:12px;white-space:nowrap;transform-origin:left center;transform:scaleX(0.9610);color:#000;font-weight:normal;">Initial Usage Period</span><span class="tx69" style="position:absolute;left:514px;top:309.84px;font-size:12px;line-height:12px;white-space:nowrap;transform-origin:left center;transform:scaleX(0.9664);color:#000;font-weight:normal;"># of Days</span><div style="position:absolute;left:566px;top:304px;width:74px;height:23px;box-sizing:border-box;border:1px solid #7a7a7a;background:#fff"></div><span class="tx70" style="position:absolute;right:306px;top:309.84px;font-size:12px;line-height:12px;white-space:nowrap;transform-origin:right center;transform:scaleX(0.9600);color:#000;font-weight:normal;">2</span><div style="position:absolute;left:820px;top:280px;width:93px;height:68px;box-sizing:border-box;border:1px solid #dcdcdc;border-radius:0"></div><div style="position:absolute;left:819px;top:274px;width:68px;height:13px;background:#fff"></div><span class="tx71" style="position:absolute;left:820px;top:274.84px;font-size:12px;line-height:12px;white-space:nowrap;transform-origin:left center;transform:scaleX(1.0159);color:#000;font-weight:normal;">Don't Count</span><div style="position:absolute;left:825px;top:292px;width:13px;height:13px;box-sizing:border-box;border:1px solid #333;background:transparent"><svg width="11" height="11" style="position:absolute;left:0;top:0" viewBox="0 0 11 11"><path d="M1.5 5.5 L4.2 8.2 L9.5 2.2" fill="none" stroke="#3a3a3a" stroke-width="1.1"/></svg></div><span class="tx72" style="position:absolute;left:840px;top:292.84px;font-size:12px;line-height:12px;white-space:nowrap;transform-origin:left center;transform:scaleX(0.9577);color:#000;font-weight:normal;">Saturday</span><div style="position:absolute;left:825px;top:308px;width:13px;height:13px;box-sizing:border-box;border:1px solid #333;background:transparent"><svg width="11" height="11" style="position:absolute;left:0;top:0" viewBox="0 0 11 11"><path d="M1.5 5.5 L4.2 8.2 L9.5 2.2" fill="none" stroke="#3a3a3a" stroke-width="1.1"/></svg></div><span class="tx73" style="position:absolute;left:840px;top:309.84px;font-size:12px;line-height:12px;white-space:nowrap;transform-origin:left center;transform:scaleX(0.9582);color:#000;font-weight:normal;">Sunday</span><div style="position:absolute;left:825px;top:325px;width:13px;height:13px;box-sizing:border-box;border:1px solid #333;background:transparent"><svg width="11" height="11" style="position:absolute;left:0;top:0" viewBox="0 0 11 11"><path d="M1.5 5.5 L4.2 8.2 L9.5 2.2" fill="none" stroke="#3a3a3a" stroke-width="1.1"/></svg></div><span class="tx74" style="position:absolute;left:840px;top:326.84px;font-size:12px;line-height:12px;white-space:nowrap;transform-origin:left center;transform:scaleX(0.9559);color:#000;font-weight:normal;">Holidays</span><div style="position:absolute;left:509px;top:371px;width:417px;height:120px;box-sizing:border-box;border:1px solid #dcdcdc;border-bottom:0"></div><div style="position:absolute;left:515px;top:365px;width:52px;height:13px;background:#fff"></div><span class="tx75" style="position:absolute;left:516px;top:363.84px;font-size:12px;line-height:12px;white-space:nowrap;transform-origin:left center;transform:scaleX(0.9670);color:#000;font-weight:normal;">Per-Diem</span><span class="tx76" style="position:absolute;left:513px;top:386.84px;font-size:12px;line-height:12px;white-space:nowrap;transform-origin:left center;transform:scaleX(0.9248);color:#000;font-weight:normal;">1. Charge $</span><div style="position:absolute;left:575px;top:382px;width:62px;height:22px;box-sizing:border-box;border:1px solid #a0a0a0;background:#f0f0f0"></div><span class="tx77" style="position:absolute;right:309px;top:386.84px;font-size:12px;line-height:12px;white-space:nowrap;transform-origin:right center;transform:scaleX(0.8855);color:#000;font-weight:normal;">$20.00</span><span class="tx78" style="position:absolute;left:640px;top:387.84px;font-size:12px;line-height:12px;white-space:nowrap;transform-origin:left center;transform:scaleX(1.0146);color:#000;font-weight:normal;">/days for the first</span><div style="position:absolute;left:733px;top:382px;width:38px;height:22px;box-sizing:border-box;border:1px solid #a0a0a0;background:#f0f0f0"></div><span class="tx79" style="position:absolute;right:175px;top:386.84px;font-size:12px;line-height:12px;white-space:nowrap;transform-origin:right center;transform:scaleX(0.8972);color:#000;font-weight:normal;">2</span><span class="tx80" style="position:absolute;left:775px;top:388.84px;font-size:12px;line-height:12px;white-space:nowrap;transform-origin:left center;transform:scaleX(0.9063);color:#000;font-weight:normal;">days.</span><span class="tx81" style="position:absolute;left:513px;top:413.84px;font-size:12px;line-height:12px;white-space:nowrap;transform-origin:left center;transform:scaleX(0.9248);color:#000;font-weight:normal;">2. Charge $</span><div style="position:absolute;left:575px;top:408px;width:62px;height:23px;box-sizing:border-box;border:1px solid #a0a0a0;background:#f0f0f0"></div><span class="tx82" style="position:absolute;right:309px;top:413.84px;font-size:12px;line-height:12px;white-space:nowrap;transform-origin:right center;transform:scaleX(0.8855);color:#000;font-weight:normal;">$25.00</span><span class="tx83" style="position:absolute;left:640px;top:414.84px;font-size:12px;line-height:12px;white-space:nowrap;transform-origin:left center;transform:scaleX(0.9993);color:#000;font-weight:normal;">/days for the next</span><div style="position:absolute;left:735px;top:408px;width:38px;height:23px;box-sizing:border-box;border:1px solid #a0a0a0;background:#f0f0f0"></div><span class="tx84" style="position:absolute;right:173px;top:413.84px;font-size:12px;line-height:12px;white-space:nowrap;transform-origin:right center;transform:scaleX(0.8972);color:#000;font-weight:normal;">2</span><span class="tx85" style="position:absolute;left:775px;top:415.84px;font-size:12px;line-height:12px;white-space:nowrap;transform-origin:left center;transform:scaleX(0.9063);color:#000;font-weight:normal;">days.</span><span class="tx86" style="position:absolute;left:513px;top:440.84px;font-size:12px;line-height:12px;white-space:nowrap;transform-origin:left center;transform:scaleX(0.9248);color:#000;font-weight:normal;">3. Charge $</span><div style="position:absolute;left:575px;top:435px;width:62px;height:23px;box-sizing:border-box;border:1px solid #a0a0a0;background:#f0f0f0"></div><span class="tx87" style="position:absolute;right:309px;top:440.84px;font-size:12px;line-height:12px;white-space:nowrap;transform-origin:right center;transform:scaleX(0.8855);color:#000;font-weight:normal;">$30.00</span><span class="tx88" style="position:absolute;left:641px;top:443.84px;font-size:12px;line-height:12px;white-space:nowrap;transform-origin:left center;transform:scaleX(1.0056);color:#000;font-weight:normal;">/day until Clock End.</span><div style="position:absolute;left:812px;top:389px;width:101px;height:67px;box-sizing:border-box;border:1px solid #dcdcdc;border-radius:0"></div><div style="position:absolute;left:818px;top:383px;width:69px;height:13px;background:#fff"></div><span class="tx89" style="position:absolute;left:820px;top:382.84px;font-size:12px;line-height:12px;white-space:nowrap;transform-origin:left center;transform:scaleX(1.0159);color:#000;font-weight:normal;">Don't Count</span><div style="position:absolute;left:824px;top:399px;width:13px;height:13px;box-sizing:border-box;border:1px solid #333;background:transparent"></div><span class="tx90" style="position:absolute;left:840px;top:400.84px;font-size:12px;line-height:12px;white-space:nowrap;transform-origin:left center;transform:scaleX(0.9577);color:#000;font-weight:normal;">Saturday</span><div style="position:absolute;left:824px;top:415px;width:13px;height:13px;box-sizing:border-box;border:1px solid #333;background:transparent"><svg width="11" height="11" style="position:absolute;left:0;top:0" viewBox="0 0 11 11"><path d="M1.5 5.5 L4.2 8.2 L9.5 2.2" fill="none" stroke="#3a3a3a" stroke-width="1.1"/></svg></div><span class="tx91" style="position:absolute;left:840px;top:416.84px;font-size:12px;line-height:12px;white-space:nowrap;transform-origin:left center;transform:scaleX(0.9582);color:#000;font-weight:normal;">Sunday</span><div style="position:absolute;left:824px;top:432px;width:13px;height:13px;box-sizing:border-box;border:1px solid #333;background:transparent"><svg width="11" height="11" style="position:absolute;left:0;top:0" viewBox="0 0 11 11"><path d="M1.5 5.5 L4.2 8.2 L9.5 2.2" fill="none" stroke="#3a3a3a" stroke-width="1.1"/></svg></div><span class="tx92" style="position:absolute;left:840px;top:433.84px;font-size:12px;line-height:12px;white-space:nowrap;transform-origin:left center;transform:scaleX(0.8907);color:#000;font-weight:normal;">Holidays</span><div style="position:absolute;left:839px;top:431px;width:42px;height:15px;box-sizing:border-box;border:1px dotted #333"></div><div style="position:absolute;left:6px;top:500px;width:930px;height:96px;box-sizing:border-box;border:1px solid #dcdcdc;border-radius:0"></div><div style="position:absolute;left:12px;top:493px;width:68px;height:13px;background:#fff"></div><span class="tx93" style="position:absolute;left:13px;top:493.84px;font-size:12px;line-height:12px;white-space:nowrap;transform-origin:left center;transform:scaleX(0.9258);color:#000;font-weight:normal;">Special Rate</span><div style="position:absolute;left:7px;top:509px;width:927px;height:87px;box-sizing:border-box;border:1px solid #a0a0a0;background:#fff"></div><div style="position:absolute;left:8px;top:510px;width:925px;height:41px;background:#fff"></div><div style="position:absolute;left:8px;top:530px;width:925px;height:1px;background:#e6e6e6"></div><div style="position:absolute;left:8px;top:550px;width:925px;height:1px;background:#e6e6e6"></div><div style="position:absolute;left:20px;top:510px;width:1px;height:41px;background:#e6e6e6"></div><div style="position:absolute;left:142px;top:510px;width:1px;height:41px;background:#e6e6e6"></div><div style="position:absolute;left:244px;top:510px;width:1px;height:41px;background:#e6e6e6"></div><div style="position:absolute;left:306px;top:510px;width:1px;height:41px;background:#e6e6e6"></div><div style="position:absolute;left:372px;top:510px;width:1px;height:41px;background:#e6e6e6"></div><div style="position:absolute;left:444px;top:510px;width:1px;height:41px;background:#e6e6e6"></div><div style="position:absolute;left:486px;top:510px;width:1px;height:41px;background:#e6e6e6"></div><div style="position:absolute;left:571px;top:510px;width:1px;height:41px;background:#e6e6e6"></div><div style="position:absolute;left:613px;top:510px;width:1px;height:41px;background:#e6e6e6"></div><div style="position:absolute;left:698px;top:510px;width:1px;height:41px;background:#e6e6e6"></div><div style="position:absolute;left:740px;top:510px;width:1px;height:41px;background:#e6e6e6"></div><div style="position:absolute;left:825px;top:510px;width:1px;height:41px;background:#e6e6e6"></div><div style="position:absolute;left:887px;top:510px;width:1px;height:41px;background:#e6e6e6"></div><span class="tx94" style="position:absolute;left:23px;top:514.84px;font-size:12px;line-height:12px;white-space:nowrap;transform-origin:left center;transform:scaleX(0.9051);color:#000;font-weight:normal;">Chassis Type</span><span class="tx95" style="position:absolute;left:146px;top:514.84px;font-size:12px;line-height:12px;white-space:nowrap;transform-origin:left center;transform:scaleX(0.8795);color:#000;font-weight:normal;">Chassis Size</span><span class="tx96" style="position:absolute;left:248px;top:514.84px;font-size:12px;line-height:12px;white-space:nowrap;transform-origin:left center;transform:scaleX(0.9034);color:#000;font-weight:normal;">Calc Seq</span><span class="tx97" style="position:absolute;left:309px;top:514.84px;font-size:12px;line-height:12px;white-space:nowrap;transform-origin:left center;transform:scaleX(0.9466);color:#000;font-weight:normal;">Region</span><span class="tx98" style="position:absolute;left:375px;top:514.84px;font-size:12px;line-height:12px;white-space:nowrap;transform-origin:left center;transform:scaleX(0.9700);color:#000;font-weight:normal;">Initial Rate</span><span class="tx99" style="position:absolute;left:447px;top:514.84px;font-size:12px;line-height:12px;white-space:nowrap;transform-origin:left center;transform:scaleX(0.8777);color:#000;font-weight:normal;">Days</span><span class="tx100" style="position:absolute;left:490px;top:514.84px;font-size:12px;line-height:12px;white-space:nowrap;transform-origin:left center;transform:scaleX(0.9507);color:#000;font-weight:normal;">Per diem rate 1</span><span class="tx101" style="position:absolute;left:575px;top:514.84px;font-size:12px;line-height:12px;white-space:nowrap;transform-origin:left center;transform:scaleX(0.8777);color:#000;font-weight:normal;">Days</span><span class="tx102" style="position:absolute;left:616px;top:514.84px;font-size:12px;line-height:12px;white-space:nowrap;transform-origin:left center;transform:scaleX(0.9507);color:#000;font-weight:normal;">Per diem rate 2</span><span class="tx103" style="position:absolute;left:702px;top:514.84px;font-size:12px;line-height:12px;white-space:nowrap;transform-origin:left center;transform:scaleX(0.8777);color:#000;font-weight:normal;">Days</span><span class="tx104" style="position:absolute;left:743px;top:514.84px;font-size:12px;line-height:12px;white-space:nowrap;transform-origin:left center;transform:scaleX(0.9507);color:#000;font-weight:normal;">Per diem rate 3</span><span class="tx105" style="position:absolute;left:828px;top:514.84px;font-size:12px;line-height:12px;white-space:nowrap;transform-origin:left center;transform:scaleX(0.9054);color:#000;font-weight:normal;">User 1</span><span class="tx106" style="position:absolute;left:890px;top:514.84px;font-size:12px;line-height:12px;white-space:nowrap;transform-origin:left center;transform:scaleX(0.8771);color:#000;font-weight:normal;">User 2</span><svg style="position:absolute;left:12px;top:535px" width="8" height="12" viewBox="0 0 8 12"><path d="M0 0 L7 6 L0 12 Z" fill="#222"/></svg><span class="tx107" style="position:absolute;left:23px;top:534.84px;font-size:12px;line-height:12px;white-space:nowrap;transform-origin:left center;transform:scaleX(0.8060);color:#000;font-weight:normal;">53REEFER</span><span class="tx108" style="position:absolute;right:640px;top:534.84px;font-size:12px;line-height:12px;white-space:nowrap;transform-origin:right center;transform:scaleX(0.9600);color:#000;font-weight:normal;">1</span><span class="tx109" style="position:absolute;right:501px;top:534.84px;font-size:12px;line-height:12px;white-space:nowrap;transform-origin:right center;transform:scaleX(0.9127);color:#000;font-weight:normal;">$25.00</span><span class="tx110" style="position:absolute;right:459px;top:534.84px;font-size:12px;line-height:12px;white-space:nowrap;transform-origin:right center;transform:scaleX(0.9600);color:#000;font-weight:normal;">0</span><span class="tx111" style="position:absolute;right:374px;top:534.84px;font-size:12px;line-height:12px;white-space:nowrap;transform-origin:right center;transform:scaleX(0.8491);color:#000;font-weight:normal;">$0.00</span><span class="tx112" style="position:absolute;right:332px;top:534.84px;font-size:12px;line-height:12px;white-space:nowrap;transform-origin:right center;transform:scaleX(0.9600);color:#000;font-weight:normal;">0</span><span class="tx113" style="position:absolute;right:247px;top:534.84px;font-size:12px;line-height:12px;white-space:nowrap;transform-origin:right center;transform:scaleX(0.8491);color:#000;font-weight:normal;">$0.00</span><span class="tx114" style="position:absolute;right:205px;top:534.84px;font-size:12px;line-height:12px;white-space:nowrap;transform-origin:right center;transform:scaleX(0.9600);color:#000;font-weight:normal;">0</span><div style="position:absolute;left:9px;top:578px;width:923px;height:16px;background:#f0f0f0"></div><div style="position:absolute;left:26px;top:578px;width:17px;height:15px;background:#cdcdcd"></div><svg style="position:absolute;left:13px;top:581px" width="9" height="10" viewBox="0 0 9 10"><path d="M7 1 L3 5 L7 9" fill="none" stroke="#444" stroke-width="2"/></svg><svg style="position:absolute;left:920px;top:581px" width="9" height="10" viewBox="0 0 9 10"><path d="M2 1 L6 5 L2 9" fill="none" stroke="#444" stroke-width="2"/></svg><div style="position:absolute;left:4px;top:143px;width:246px;height:336px;box-sizing:border-box;border:7px solid rgba(255,0,0,0.4);background:rgba(0,0,0,0.215);background-clip:padding-box"></div><div style="position:absolute;left:254px;top:143px;width:246px;height:337px;box-sizing:border-box;border:7px solid rgba(0,255,0,0.4);background:rgba(0,0,0,0.215);background-clip:padding-box"></div><div style="position:absolute;left:505px;top:144px;width:431px;height:348px;box-sizing:border-box;border:7px solid rgba(0,0,255,0.4);background:rgba(0,0,0,0.215);background-clip:padding-box"></div><div style="position:absolute;left:5px;top:492px;width:933px;height:75px;box-sizing:border-box;border:7px solid rgba(0,0,255,0.4);border-top:0;background:rgba(0,0,0,0.215);background-clip:padding-box"></div><div style="position:absolute;left:5px;top:485px;width:500px;height:7px;background:rgba(0,0,255,0.4)"></div><div style="position:absolute;left:936px;top:485px;width:2px;height:7px;background:rgba(0,0,255,0.4)"></div><div style="position:absolute;left:21px;top:237px;width:208px;height:101px;background:#cacaca"></div><div style="position:absolute;left:30px;top:240px;width:85px;height:19px;background:rgba(0,0,0,0.055);border-radius:50%;filter:blur(1.5px)"></div><div style="position:absolute;left:28px;top:275px;width:178px;height:15px;background:rgba(0,0,0,0.055);border-radius:50%;filter:blur(1.5px)"></div><div style="position:absolute;left:55px;top:284px;width:60px;height:48px;background:rgba(0,0,0,0.055);border-radius:40%;filter:blur(1.5px)"></div><div style="position:absolute;left:45px;top:322px;width:105px;height:14px;background:rgba(0,0,0,0.055);border-radius:50%;filter:blur(1.5px)"></div><div style="position:absolute;left:209px;top:238px;width:19px;height:99px;background:rgba(0,0,0,0.04)"></div><div style="position:absolute;left:270px;top:222px;width:210px;height:175px;background:#cacaca"></div><div style="position:absolute;left:272px;top:224px;width:168px;height:32px;background:rgba(0,0,0,0.055);border-radius:50%;filter:blur(1.5px)"></div><div style="position:absolute;left:272px;top:268px;width:50px;height:50px;background:rgba(0,0,0,0.055);border-radius:40%;filter:blur(1.5px)"></div><div style="position:absolute;left:300px;top:290px;width:160px;height:14px;background:rgba(0,0,0,0.055);border-radius:50%;filter:blur(1.5px)"></div><div style="position:absolute;left:272px;top:345px;width:96px;height:32px;background:rgba(0,0,0,0.055);border-radius:50%;filter:blur(1.5px)"></div><div style="position:absolute;left:272px;top:376px;width:208px;height:21px;background:rgba(0,0,0,0.055);border-radius:30%;filter:blur(1.5px)"></div><div style="position:absolute;left:455px;top:295px;width:23px;height:97px;background:rgba(0,0,0,0.055);border-radius:40%;filter:blur(1.5px)"></div><div style="position:absolute;left:390px;top:330px;width:65px;height:15px;background:rgba(0,0,0,0.055);border-radius:50%;filter:blur(1.5px)"></div><div style="position:absolute;left:611px;top:228px;width:197px;height:129px;background:#cacaca"></div><div style="position:absolute;left:808px;top:238px;width:12px;height:119px;background:#cacaca"></div><div style="position:absolute;left:612px;top:229px;width:78px;height:17px;background:rgba(0,0,0,0.055);border-radius:50%;filter:blur(1.5px)"></div><div style="position:absolute;left:726px;top:229px;width:48px;height:20px;background:rgba(0,0,0,0.055);border-radius:50%;filter:blur(1.5px)"></div><div style="position:absolute;left:611px;top:245px;width:19px;height:40px;background:rgba(0,0,0,0.055);border-radius:30%;filter:blur(1.5px)"></div><div style="position:absolute;left:625px;top:306px;width:55px;height:17px;background:rgba(0,0,0,0.055);border-radius:50%;filter:blur(1.5px)"></div><div style="position:absolute;left:690px;top:308px;width:115px;height:16px;background:rgba(0,0,0,0.055);border-radius:50%;filter:blur(1.5px)"></div><div style="position:absolute;left:640px;top:266px;width:120px;height:14px;background:rgba(0,0,0,0.055);border-radius:50%;filter:blur(1.5px)"></div><span class="tx115" style="position:absolute;left:41px;top:252.64px;font-size:33.5px;line-height:33.5px;white-space:nowrap;transform-origin:left center;transform:scaleX(0.9809);color:#000;font-weight:bold;-webkit-text-stroke:0.5px #000">Criteria for</span><span class="tx116" style="position:absolute;left:33px;top:290.64px;font-size:33.5px;line-height:33.5px;white-space:nowrap;transform-origin:left center;transform:scaleX(0.9742);color:#000;font-weight:bold;-webkit-text-stroke:0.5px #000">rate to appy</span><span class="tx117" style="position:absolute;left:316px;top:238.64px;font-size:33.5px;line-height:33.5px;white-space:nowrap;transform-origin:left center;transform:scaleX(1.0211);color:#000;font-weight:bold;-webkit-text-stroke:0.5px #000">How to</span><span class="tx118" style="position:absolute;left:294px;top:276.64px;font-size:33.5px;line-height:33.5px;white-space:nowrap;transform-origin:left center;transform:scaleX(0.9487);color:#000;font-weight:bold;-webkit-text-stroke:0.5px #000">create and</span><span class="tx119" style="position:absolute;left:291px;top:314.64px;font-size:33.5px;line-height:33.5px;white-space:nowrap;transform-origin:left center;transform:scaleX(0.9429);color:#000;font-weight:bold;-webkit-text-stroke:0.5px #000">display the</span><span class="tx120" style="position:absolute;left:315px;top:351.64px;font-size:33.5px;line-height:33.5px;white-space:nowrap;transform-origin:left center;transform:scaleX(0.9105);color:#000;font-weight:bold;-webkit-text-stroke:0.5px #000">charges</span><span class="tx121" style="position:absolute;left:645px;top:242.64px;font-size:33.5px;line-height:33.5px;white-space:nowrap;transform-origin:left center;transform:scaleX(0.9815);color:#000;font-weight:bold;-webkit-text-stroke:0.5px #000">How and</span><span class="tx122" style="position:absolute;left:658px;top:280.64px;font-size:33.5px;line-height:33.5px;white-space:nowrap;transform-origin:left center;transform:scaleX(0.9724);color:#000;font-weight:bold;-webkit-text-stroke:0.5px #000">what to</span><span class="tx123" style="position:absolute;left:663px;top:319.64px;font-size:33.5px;line-height:33.5px;white-space:nowrap;transform-origin:left center;transform:scaleX(0.9285);color:#000;font-weight:bold;-webkit-text-stroke:0.5px #000">charge</span></body></html>
